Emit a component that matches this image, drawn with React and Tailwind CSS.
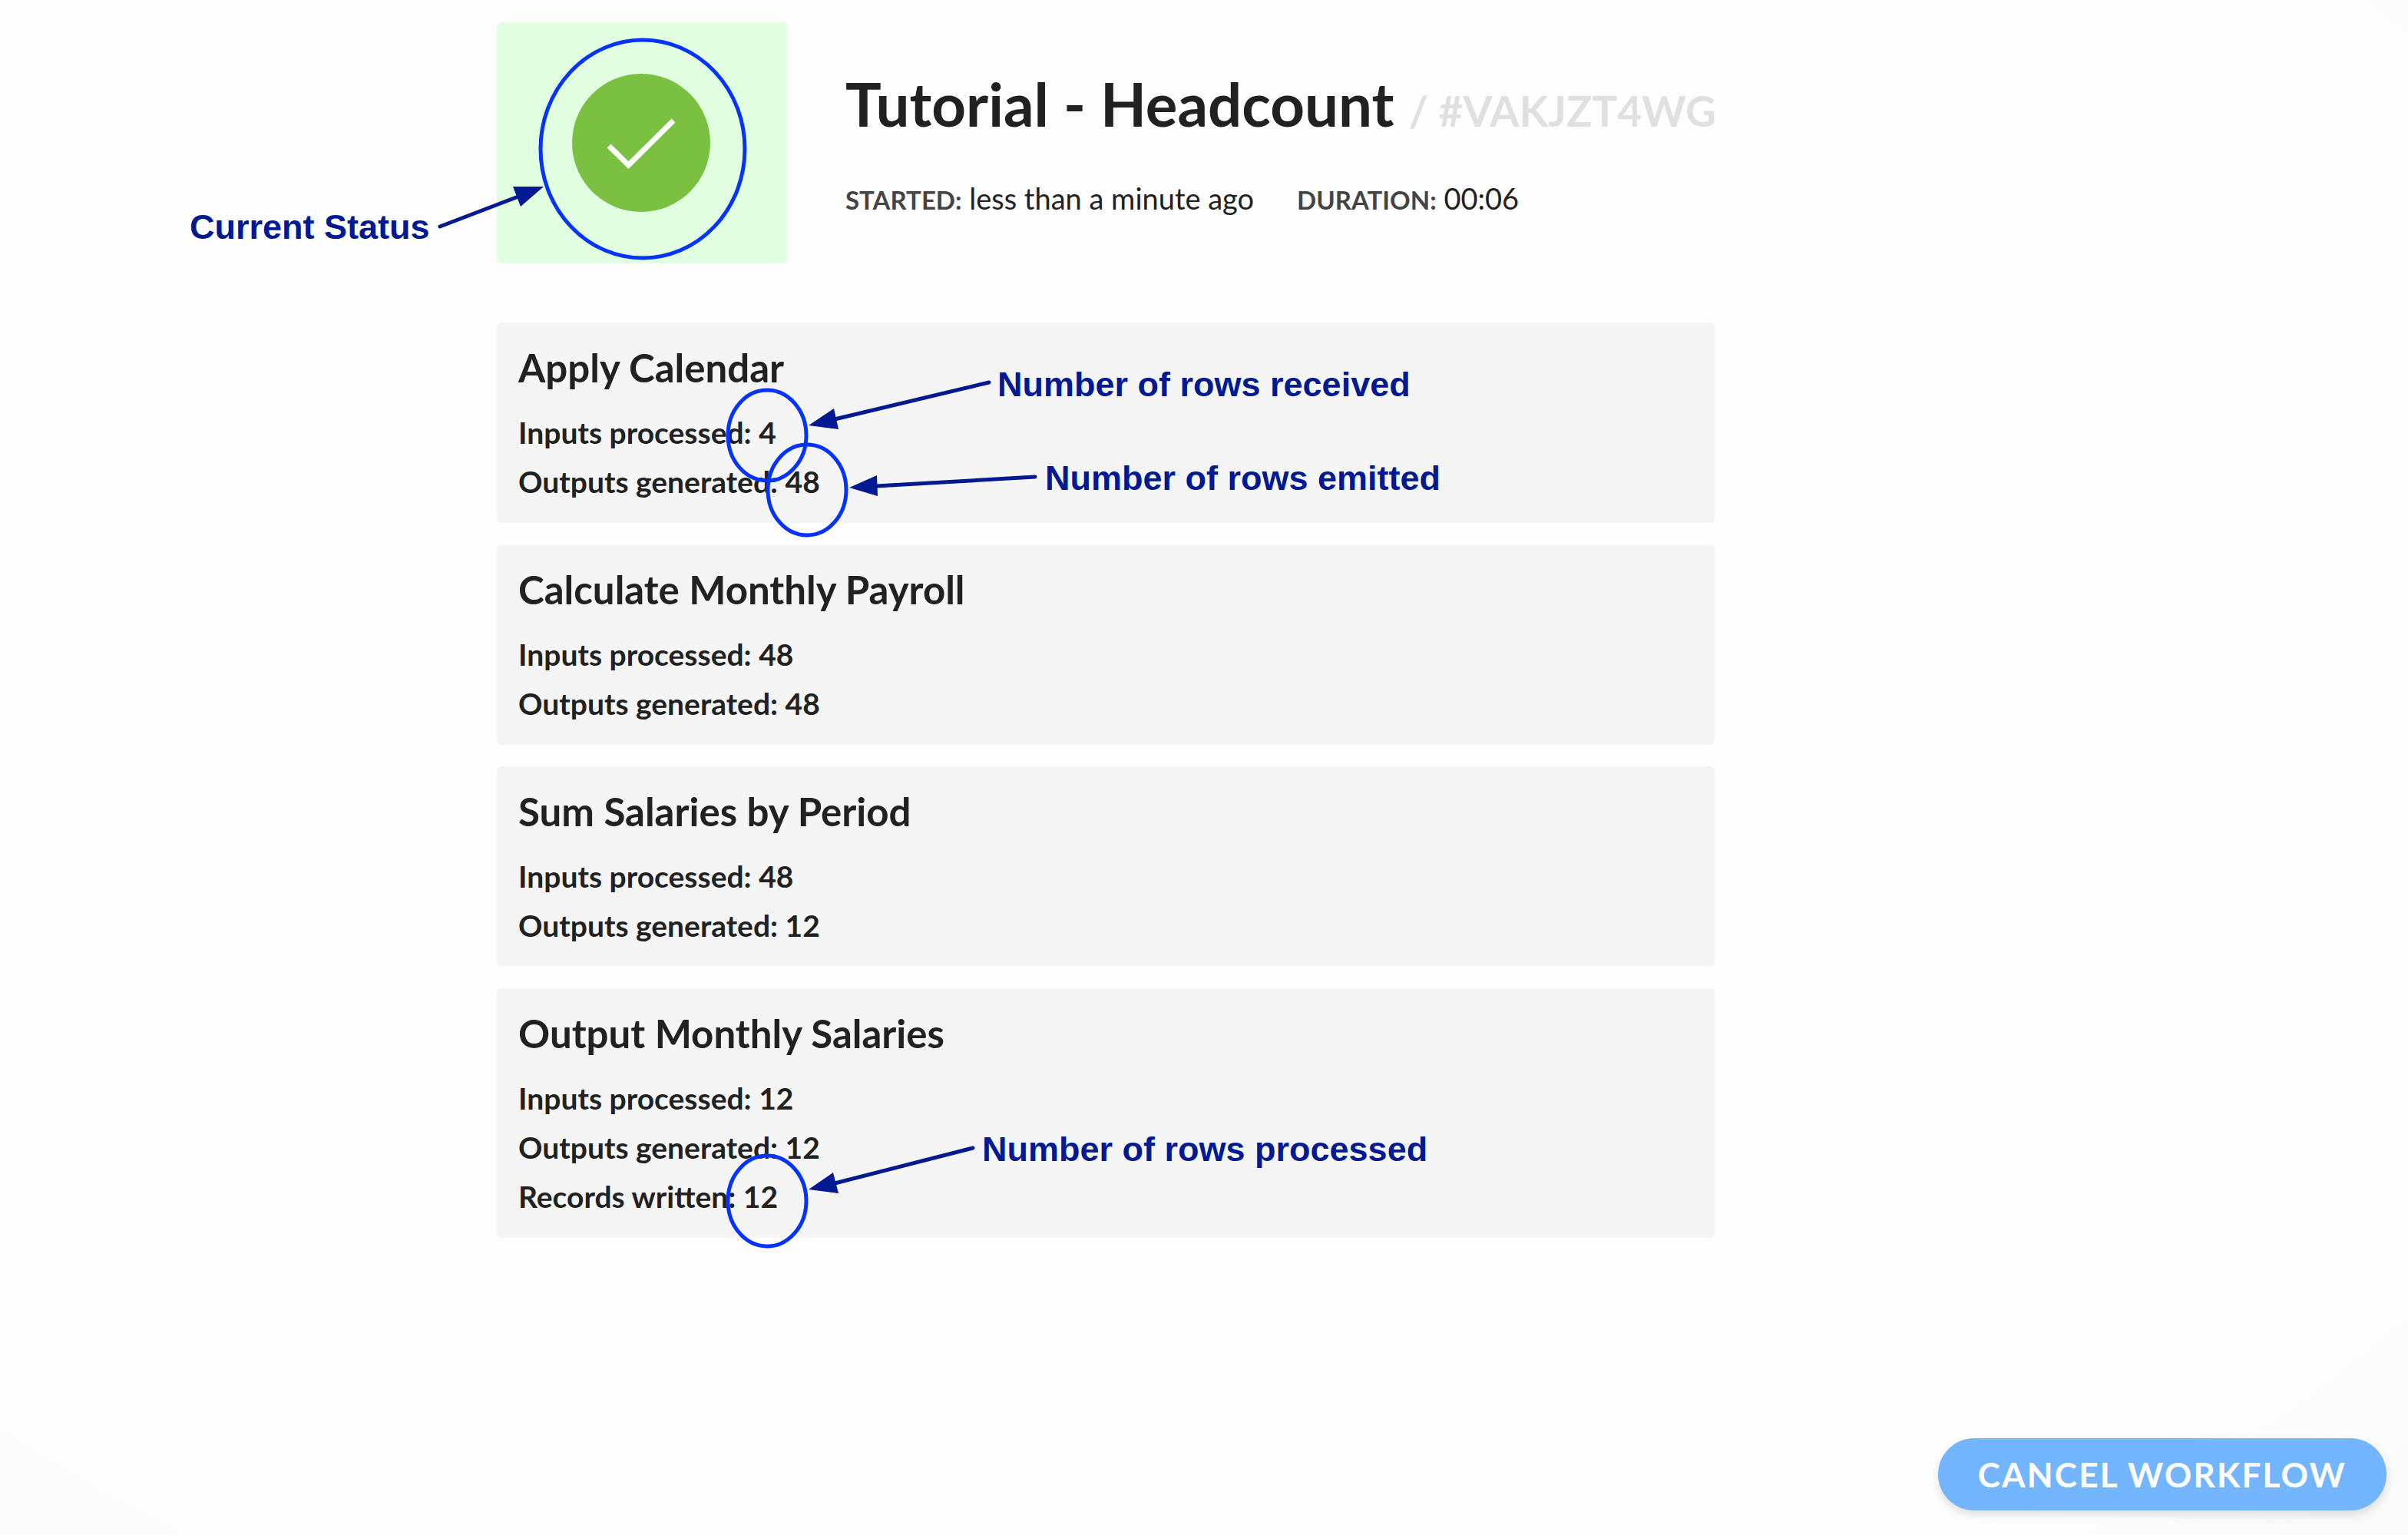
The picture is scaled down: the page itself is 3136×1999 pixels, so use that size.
const steps = [
  { name: 'Apply Calendar', stats: [['Inputs processed', 4], ['Outputs generated', 48]] },
  { name: 'Calculate Monthly Payroll', stats: [['Inputs processed', 48], ['Outputs generated', 48]] },
  { name: 'Sum Salaries by Period', stats: [['Inputs processed', 48], ['Outputs generated', 12]] },
  {
    name: 'Output Monthly Salaries',
    stats: [['Inputs processed', 12], ['Outputs generated', 12], ['Records written', 12]],
  },
];

function StatusBadge() {
  return (
    <div className="flex h-[314px] w-[378px] shrink-0 justify-center rounded-md bg-[#e1fee1] pt-[67px]">
      <svg className="mr-[2px] h-[180px] w-[180px]" viewBox="0 0 180 180" role="img" aria-label="Completed">
        <circle cx="90" cy="90" r="90" fill="#7ac142" />
        <path d="M48 94 L73.500 119 L132 61" fill="none" stroke="#fff" strokeWidth="7" />
      </svg>
    </div>
  );
}

function StepCard({ name, stats }) {
  return (
    <section className="rounded-md bg-[#f5f5f5] px-[28px] pt-[30px] pb-[22px]">
      <h2 className="mb-[23px] text-[51px] leading-[58px] font-bold">{name}</h2>
      {stats.map(([label, value]) => (
        <p key={label} className="text-[39px] leading-[64px] font-bold">
          {label}: {value}
        </p>
      ))}
    </section>
  );
}

/* Callouts drawn on top of the report; origin is the report's top-left corner. */
function Annotations() {
  const label =
    "absolute whitespace-nowrap font-['Liberation_Sans',Arial,sans-serif] text-[45px] leading-[45px] font-bold text-[#011993]";
  return (
    <div className="pointer-events-none absolute top-0 left-0">
      <svg className="absolute top-0 left-0 overflow-visible" width="10" height="10" aria-hidden="true">
        <g fill="none" stroke="#0433ff" strokeWidth="5">
          <ellipse cx="190" cy="194" rx="133" ry="142" />
          <ellipse cx="352" cy="567" rx="51" ry="59" />
          <ellipse cx="404" cy="638" rx="51" ry="59" />
          <ellipse cx="352" cy="1564" rx="51" ry="59" />
        </g>
        <g stroke="#011993" strokeWidth="5" strokeLinecap="round">
          <path d="M-74 295 L28 256" />
          <path d="M641 498 L440 546" />
          <path d="M701 621 L494 633" />
          <path d="M620 1495 L440 1541" />
        </g>
        <g fill="#011993">
          <path d="M61 243 L21 243 L31 269 Z" />
          <path d="M406 554 L439 532 L445 559 Z" />
          <path d="M459 635 L495 619 L496 646 Z" />
          <path d="M406 1549 L438 1527 L445 1554 Z" />
        </g>
      </svg>
      <span className={`${label} top-[273px] left-[-400px]`}>Current Status</span>
      <span className={`${label} top-[478px] left-[652px]`}>Number of rows received</span>
      <span className={`${label} top-[600px] left-[714px]`}>Number of rows emitted</span>
      <span className={`${label} top-[1474px] left-[632px]`}>Number of rows processed</span>
    </div>
  );
}

export default function App() {
  return (
    <div className="flex min-h-screen flex-col bg-[radial-gradient(ellipse_at_47%_44%,#fefefe_0%,#fefefe_83%,#f9f9f9_100%)] font-[Lato,sans-serif] text-[#212121]">
      <main className="flex justify-center pr-64">
        <div className="relative w-full max-w-[1586px] pt-[29px]">
          <header className="mb-[77px] flex gap-[76px]">
            <StatusBadge />
            <div className="pt-[58px] whitespace-nowrap">
              <h1 className="mb-[51px] text-[78px] leading-[96px] font-bold">
                Tutorial - Headcount <small className="text-[55px] leading-none text-[#e0e0e0]">/ #VAKJZT4WG</small>
              </h1>
              <div className="flex gap-[56px] text-[38px] leading-[48px]">
                <p>
                  <strong className="text-[33px] leading-none font-bold text-[#444]">STARTED:</strong> less than a minute
                  ago
                </p>
                <p>
                  <strong className="text-[33px] leading-none font-bold text-[#444]">DURATION:</strong> 00:06
                </p>
              </div>
            </div>
          </header>
          <div className="flex flex-col gap-[28px]">
            {steps.map((step) => (
              <StepCard key={step.name} {...step} />
            ))}
          </div>
          <Annotations />
        </div>
      </main>
      <button
        type="button"
        className="mt-auto mr-[28px] mb-[32px] h-[94px] self-end rounded-full bg-[#74b5ff] px-[52px] text-[44px] leading-[48px] font-bold tracking-wider text-white shadow-[0_6px_12px_rgba(0,0,0,0.12)]"
      >
        CANCEL WORKFLOW
      </button>
    </div>
  );
}
